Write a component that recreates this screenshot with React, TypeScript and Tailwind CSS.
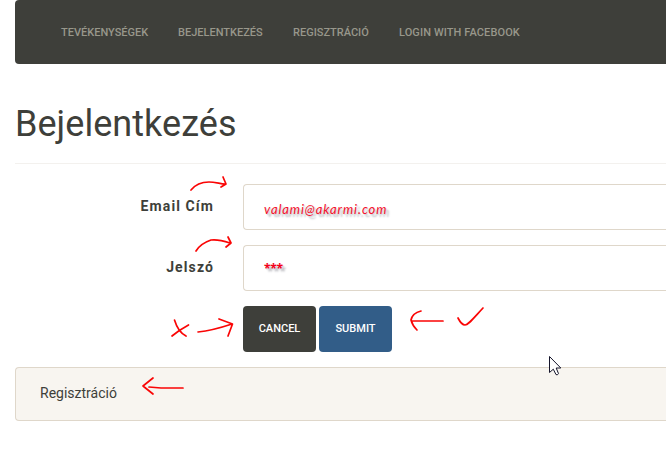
import React from "react";

const links = [
  { label: "TEVÉKENYSÉGEK", width: "w-[87px]" },
  { label: "BEJELENTKEZÉS", width: "w-[85px]" },
  { label: "REGISZTRÁCIÓ", width: "w-[76px]" },
  { label: "LOGIN WITH FACEBOOK", width: "w-[122px] tracking-[0.1px]" },
];

function Field({ label, value, valueClass }: { label: string; value: string; valueClass: string }) {
  return (
    <div className="flex h-[46px]">
      <label className="w-[199px] shrink-0 pt-3 text-right text-[14px] leading-5 font-bold tracking-[1.1px]">
        {label}
      </label>
      <div className="ml-[29px] flex flex-1 rounded-l border border-r-0 border-[#dfd7ca] bg-white pt-[14px] pl-5">
        <span className={valueClass}>{value}</span>
      </div>
    </div>
  );
}

function Annotations() {
  return (
    <svg
      className="pointer-events-none absolute inset-0"
      width="666"
      height="469"
      viewBox="0 0 666 469"
      fill="none"
      stroke="#fa0505"
      strokeWidth="1.7"
      strokeLinecap="round"
      strokeLinejoin="round"
    >
      <path d="M191 190C195 185 202 182 209 182C215 182 221 184 225 184M223 177L226 184L221 187" />
      <path d="M196 251C199 246 205 242 211 240C218 239 224 241 230 243M228 237L231 243L226 247" />
      <path d="M174.500 320C176 325 180 333 186 336M188.500 325C183 328 178 331 172 336" />
      <path d="M198 332C208 331 220 328 232 324M219 319L232.500 324L228 336" />
      <path d="M421 311C417 312 412 315 411 320C412 324 414 327 417 330M411.500 321H443" />
      <path d="M458 318C460 322 463 325 465 325C468 325 471 321 483 308" />
      <path d="M153 378L143 386L153 394M149 387L161 388H183" />
    </svg>
  );
}

function Cursor() {
  return (
    <svg className="pointer-events-none absolute top-[356px] left-[549px]" width="14" height="21" viewBox="0 0 14 21">
      <path
        d="M.5 .5V16.500L4.300 13.200L7 18.600Q8.500 19.500 9.500 17.600L7.200 12H11.800Z"
        fill="#fff"
        stroke="#15152b"
        strokeWidth="1"
      />
    </svg>
  );
}

export default function App() {
  return (
    <div className="relative h-[469px] w-[666px] overflow-hidden bg-white pl-[15px] font-['Roboto',sans-serif] text-[#3e3f3a]">
      <nav className="flex h-16 gap-[30px] rounded-l bg-[#3e3f3a] pt-[23px] pl-[46px] text-[11px] leading-5 font-medium text-[#98978b]">
        {links.map((link) => (
          <a key={link.label} className={`${link.width} shrink-0 whitespace-nowrap`}>
            {link.label}
          </a>
        ))}
      </nav>
      <h1 className="mt-10 h-[59px] text-[36px] leading-[40px] font-normal tracking-[0.05px]">Bejelentkezés</h1>
      <hr className="border-[#f3f1ee]" />
      <form className="mt-5 flex flex-col gap-[15px]">
        <Field
          label="Email Cím"
          value="valami@akarmi.com"
          valueClass="font-['Lato',sans-serif] text-[13px] leading-5 italic tracking-[0.9px] text-[#f5102c] [text-shadow:1px_1px_1px_#d5d5d8,3px_3px_2px_#bbbbc0]"
        />
        <Field
          label="Jelszó"
          value="***"
          valueClass="font-['Open_Sans',sans-serif] text-[12px] leading-[18px] font-bold tracking-[-0.3px] text-[#f5001a] [text-shadow:1px_1px_1px_#d5d5d8,3px_3px_2px_#bbbbc0]"
        />
        <div className="ml-[228px] flex gap-[3px] text-[11px] font-medium text-white">
          <button type="button" className="h-[46px] w-[73px] rounded bg-[#3e3f3a]">
            CANCEL
          </button>
          <button type="button" className="h-[46px] w-[73px] rounded bg-[#325d88]">
            SUBMIT
          </button>
        </div>
      </form>
      <div className="mt-[15px] flex h-[54px] items-center rounded-l border border-r-0 border-[#dfd7ca] bg-[#f8f5f0] pb-0.5 pl-6 text-[14px]">
        <a>Regisztráció</a>
      </div>
      <Annotations />
      <Cursor />
    </div>
  );
}
